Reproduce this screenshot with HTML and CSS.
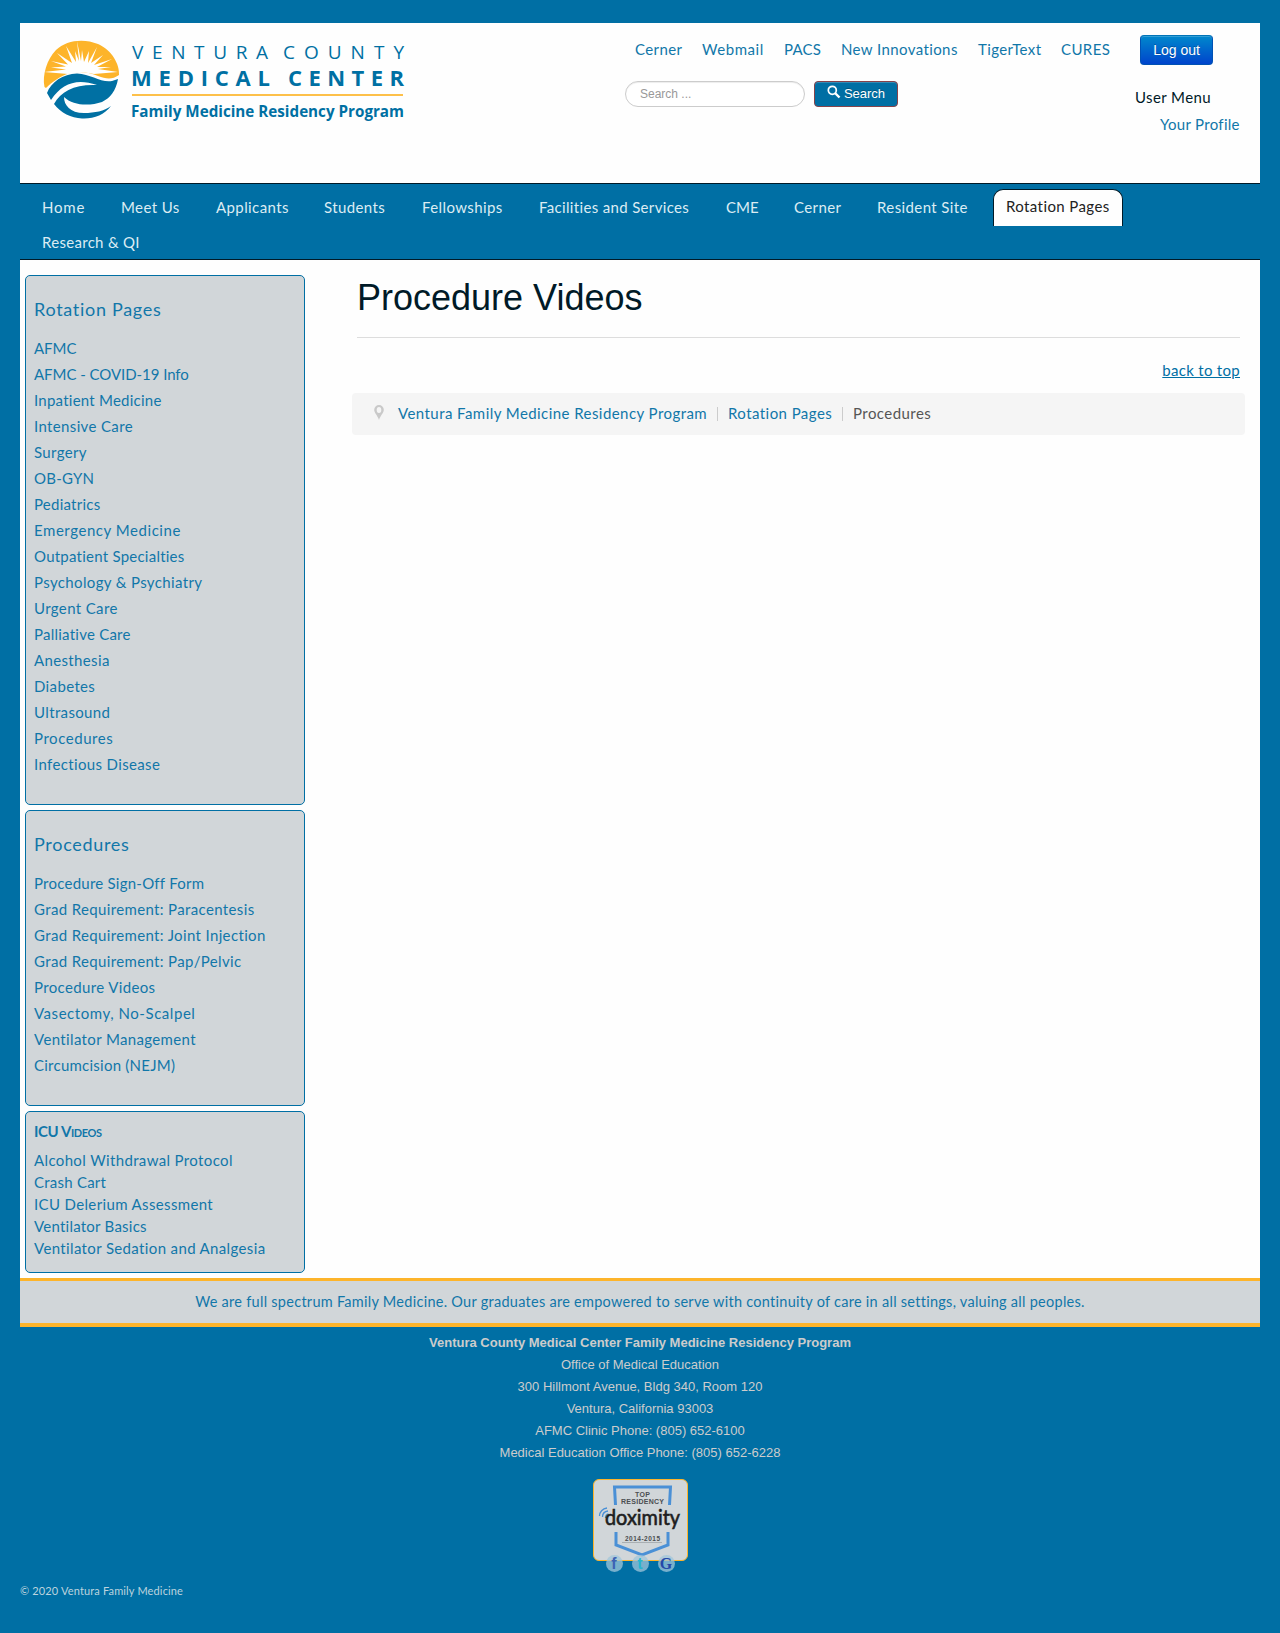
FILE: index.html
```html
<!DOCTYPE html>
<html lang="en">
<head>
<meta charset="utf-8">
<title>Procedure Videos</title>
<link rel="stylesheet" href="styles.css">
</head>
<body>
<div class="page">
  <header class="header">
    <svg class="logo" width="375" height="96" viewBox="40 37 375 96" role="img" aria-label="Ventura County Medical Center">
      <path fill="#fdb42a" d="M44.500 87C42 75 47 59 56 50C66 40 84 38 98 44C112 50 120 65 119 75C112 80 106 79 98 76C88 72 80 71 70 73C60 76 52 82 46 88Z"/>
      <path fill="#fff" d="M82 50L84 62L89 51L88 63L97 47L91 63L103 55L94 65L112 59L97 67L111 67L98 69L118 72L94 74L82 72L68 74L44 72L66 69.500L51 67.500L66 66.500L51 61L68 64.500L57 53L72 63L66 46L76 62L75 51L79 61L77 41L81 61Z"/>
      <path fill="#0070a3" d="M47 93C51 82 63 74 77 73.500C91 74 101 83 112 81L118 79C116 91 110 98 102 102C90 106 73 106 64 97C64 105 70 113 84 113C95 113 104 111 111 106C104 115 94 119 82 118.500C71 118 61 113 54 104C61 91 75 84 97 85C77 78 62 83 51 100Z"/>
      <g fill="#0070a3" class="logo-text">
        <text x="132" y="59" font-size="19" textLength="136">VENTURA</text>
        <text x="283" y="59" font-size="19" textLength="121">COUNTY</text>
        <text x="131" y="85.500" font-size="22" font-weight="700" textLength="139">MEDICAL</text>
        <text x="288" y="85.500" font-size="22" font-weight="700" textLength="116">CENTER</text>
        <text x="131" y="116.500" font-size="16.500" font-weight="700" textLength="273" lengthAdjust="spacingAndGlyphs">Family Medicine Residency Program</text>
      </g>
      <path fill="#fdc04a" d="M132 94h271v2H132z"/>
    </svg>
    <div class="tools">
      <nav class="quick">
        <a class="w47">Cerner</a><a class="w62">Webmail</a><a class="w37">PACS</a><a class="w117">New Innovations</a><a class="w63">TigerText</a><a class="w49">CURES</a>
      </nav>
      <form class="search">
        <input type="text" placeholder="Search ...">
        <button type="button"><svg width="14" height="14" viewBox="0 0 14 14"><circle cx="5.300" cy="5.300" r="4" fill="none" stroke="#fff" stroke-width="1.700"/><path d="M8 8l4.500 4.500" stroke="#fff" stroke-width="2.400"/></svg>Search</button>
      </form>
    </div>
    <div class="user">
      <button class="logout" type="button">Log out</button>
      <div class="user-title">User Menu</div>
      <a class="profile">Your Profile</a>
    </div>
  </header>
  <nav class="menu">
    <a class="m-home">Home</a><a class="m-meet">Meet Us</a><a class="m-app">Applicants</a><a class="m-stu">Students</a><a class="m-fel">Fellowships</a><a class="m-fac">Facilities and Services</a><a class="m-cme">CME</a><a class="m-cer">Cerner</a><a class="m-res">Resident Site</a><a class="active">Rotation Pages</a><a class="m-qi">Research &amp; QI</a>
  </nav>
  <div class="content">
    <aside class="sidebar">
      <section class="box rotation">
        <h3>Rotation Pages</h3>
        <ul>
          <li class="flat">AFMC</li><li class="flat">AFMC - COVID-19 Info</li><li class="tight">Inpatient Medicine</li><li>Intensive Care</li><li>Surgery</li><li class="tight">OB-GYN</li><li class="tight">Pediatrics</li><li class="wide">Emergency Medicine</li><li class="tight">Outpatient Specialties</li><li>Psychology &amp; Psychiatry</li><li>Urgent Care</li><li class="tight">Palliative Care</li><li>Anesthesia</li><li>Diabetes</li><li>Ultrasound</li><li class="wide">Procedures</li><li>Infectious Disease</li>
        </ul>
      </section>
      <section class="box procedures">
        <h3>Procedures</h3>
        <ul>
          <li class="tight">Procedure Sign-Off Form</li><li>Grad Requirement: Paracentesis</li><li>Grad Requirement: Joint Injection</li><li>Grad Requirement: Pap/Pelvic</li><li>Procedure Videos</li><li class="wide">Vasectomy, No-Scalpel</li><li>Ventilator Management</li><li class="tight">Circumcision (NEJM)</li>
        </ul>
      </section>
      <section class="box videos">
        <h4>ICU Videos</h4>
        <ul>
          <li>Alcohol Withdrawal Protocol</li><li class="tight">Crash Cart</li><li>ICU Delerium Assessment</li><li class="tight">Ventilator Basics</li><li>Ventilator Sedation and Analgesia</li>
        </ul>
      </section>
    </aside>
    <main class="main">
      <h1>Procedure Videos</h1>
      <a class="top">back to top</a>
      <div class="crumbs">
        <svg width="10" height="15" viewBox="0 0 10 15"><path fill="#c9c9c9" fill-rule="evenodd" d="M5 0a4.800 4.800 0 0 1 4.800 4.800C9.800 8 6.500 10.500 5 15C3.500 10.500.2 8 .2 4.800A4.800 4.800 0 0 1 5 0zM5 2a2.300 3 0 0 0 0 6a2.300 3 0 0 0 0-6z"/></svg>
        <a class="c1">Ventura Family Medicine Residency Program</a><i></i><a class="c2">Rotation Pages</a><i></i><span>Procedures</span>
      </div>
    </main>
  </div>
  <div class="banner">We are full spectrum Family Medicine. Our graduates are empowered to serve with continuity of care in all settings, valuing all peoples.</div>
</div>
<footer class="footer">
  <p><b>Ventura County Medical Center Family Medicine Residency Program</b></p>
  <p>Office of Medical Education</p>
  <p>300 Hillmont Avenue, Bldg 340, Room 120</p>
  <p>Ventura, California 93003</p>
  <p>AFMC Clinic Phone: (805) 652-6100</p>
  <p>Medical Education Office Phone: (805) 652-6228</p>
  <div class="badge">
    <svg width="93" height="80" viewBox="0 0 93 80">
      <g fill="none" stroke="#4a90d6" stroke-width="3">
        <path d="M21.500 25L20.500 7h56l-1 18M22 52v13l26 10 26-10V52"/>
        <path stroke-width="1.300" d="M5.500 36c0-4 3-7.500 7.500-8M8.500 37c0-3 2-5.500 5.500-6M11.500 38c0-2 1-3.500 3-4"/>
      </g>
      <path stroke="#a9afb3" d="M28 62.500h40"/>
      <g fill="#4b4e52" class="badge-text">
        <text x="41" y="16.500" font-size="7" textLength="15">TOP</text>
        <text x="27" y="24" font-size="7" textLength="43">RESIDENCY</text>
        <text x="31" y="61" font-size="6.500" textLength="35">2014-2015</text>
      </g>
      <text class="dox" x="11" y="45" font-size="21" fill="#1d1d20" stroke="#1d1d20" stroke-width=".6" textLength="75" lengthAdjust="spacingAndGlyphs">doximity</text>
    </svg>
  </div>
  <div class="social">
    <a class="fb">f</a><a class="tw">t</a><a class="gg">G</a>
  </div>
  <div class="copy">© 2020 Ventura Family Medicine</div>
</footer>
</body>
</html>
```
FILE: styles.css
```css
* { box-sizing: border-box; }
body {
  margin: 0;
  padding: 23px 20px 0;
  height: 1633px;
  background: #006fa4;
  color: #001a27;
  font: 15px/22px Lato, "Open Sans", sans-serif;
  letter-spacing: .4px;
}
a { color: #1177a9; white-space: nowrap; }
ul { list-style: none; margin: 0; padding: 0; }
input, button { letter-spacing: 0; }
.page { background: #fefefe; }

.header { height: 160px; display: flex; }
.logo { margin: 14px 0 0 20px; flex: none; }
.logo-text { font-family: "Open Sans", sans-serif; letter-spacing: 0; }
.tools { margin-left: 210px; width: 495px; flex: none; }
.quick { display: flex; gap: 20px; padding: 15px 0 0 10px; }
.w47 { width: 47px; } .w62 { width: 62px; letter-spacing: .55px; } .w37 { width: 37px; letter-spacing: .2px; }
.w117 { width: 117px; } .w63 { width: 63px; } .w49 { width: 49px; }
.search { display: flex; gap: 9px; margin: 21px 0 0; }
.search input {
  width: 180px; height: 26px;
  border: 1px solid #ccc; border-radius: 13px;
  padding: 0 14px; background: #fff;
  font: 12px "Liberation Sans", Arial, sans-serif;
  box-shadow: inset 0 1px 1px rgba(0,0,0,.075);
}
.search input::placeholder { color: #999; }
.search button {
  width: 84px; height: 26px; padding: 0 0 2px;
  display: flex; align-items: center; justify-content: center; gap: 3px;
  color: #fff; background: #006fa4;
  border: 1px solid #87434a; border-radius: 4px;
  font: 13px "Liberation Sans", Arial, sans-serif;
  text-shadow: 0 -1px 0 rgba(0,0,0,.25);
  box-shadow: inset 0 1px 0 rgba(255,255,255,.2);
}
.search button svg { margin-top: -2px; }
.user { flex: 1; display: flex; flex-direction: column; align-items: flex-start; padding: 12px 0 0 15px; }
.logout {
  margin-left: 5px; width: 73px; height: 30px; padding: 0;
  color: #fff; border: 1px solid #0052b4; border-top-color: #0074b8; border-radius: 4px;
  background: linear-gradient(#08c, #04c);
  font: 14px "Liberation Sans", Arial, sans-serif;
  text-shadow: 0 -1px 0 rgba(0,0,0,.25);
  box-shadow: inset 0 1px 0 rgba(255,255,255,.2);
}
.user-title { margin-top: 21px; }
.profile { margin: 5px 0 0 25px; letter-spacing: .3px; }

.menu {
  height: 77px; border: solid #001a27; border-width: 1px 0;
  background: #006fa4;
  display: flex; flex-wrap: wrap; align-content: flex-start;
  padding: 5px 22px 0;
}
.menu a { color: #dcecf3; height: 35px; line-height: 36px; }
.m-home { width: 79px; letter-spacing: .8px; } .m-meet { width: 95px; } .m-app { width: 108px; }
.m-stu { width: 98px; } .m-fel { width: 117px; }
.m-fac { width: 187px; letter-spacing: .34px; }
.m-cme { width: 68px; letter-spacing: 0; } .m-cer { width: 83px; } .m-res { width: 116px; }
.m-qi { width: 130px; letter-spacing: .3px; }
.menu .active {
  width: 130px; height: 37px; margin: 0 40px -2px 0; padding-left: 12px; line-height: 32px;
  color: #222; background: #fefefe;
  border: 1px solid #001a27; border-bottom: 0; border-radius: 10px 10px 0 0;
}

.content { display: flex; height: 1018px; padding: 15px 15px 0 5px; }
.sidebar { width: 280px; display: flex; flex-direction: column; gap: 5px; }
.box { background: #d1d6d9; border: 1px solid #006fa4; border-radius: 5px; padding: 0 8px; color: #1177a9; letter-spacing: .36px; }
.box li { line-height: 26px; white-space: nowrap; }
.box .flat { letter-spacing: -.05px; }
.box .tight { letter-spacing: .24px; }
.box .wide { letter-spacing: .55px; }
.rotation { height: 530px; }
.procedures { height: 296px; }
.videos { height: 162px; }
.box h3 { margin: 21px 0 14px; font: 18px/24px Lato, sans-serif; letter-spacing: .7px; }
.box h4 { margin: 8px 0 7px; font-size: 15px; line-height: 22px; font-variant: small-caps; letter-spacing: -.4px; }
.box.videos li { line-height: 22px; }

.main { flex: 1; margin-left: 47px; display: flex; flex-direction: column; }
.main h1 {
  margin: 0 5px; height: 63px; border-bottom: 1px solid #ddd;
  font: 36px/46px "Liberation Sans", Arial, sans-serif; letter-spacing: 0;
}
.top { align-self: flex-end; margin: 21px 5px 12px 0; color: #006fa4; text-decoration: underline; letter-spacing: .3px; }
.crumbs { height: 42px; background: #f5f5f5; border-radius: 4px; display: flex; align-items: center; padding: 0 22px 2px; color: #555; letter-spacing: .44px; }
.crumbs svg { margin: -2px 14px 0 0; }
.crumbs i { width: 1px; height: 14px; background: #ccc; margin: 2px 10px 0; }
.c1 { width: 309px; } .c2 { width: 104px; }

.banner {
  height: 49px; border: solid #fdb42a; border-width: 3px 0 4px;
  background: #d1d6d9; color: #1177a9; text-align: center;
  font-size: 14.5px; line-height: 42px; letter-spacing: .27px;
  white-space: nowrap;
}

.footer { color: #ccc; text-align: center; font: 13px/22px "Liberation Sans", Arial, sans-serif; padding-top: 5px; letter-spacing: 0; }
.footer p { margin: 0; }
.badge { width: 95px; height: 82px; margin: 15px auto 0; background: #d1d6d9; border: 1px solid #fdb42a; border-radius: 6px; }
.badge svg { display: block; }
.badge-text { font-family: "Liberation Sans", Arial, sans-serif; font-weight: 700; }
.dox { font-family: Lato, sans-serif; }
.social { position: relative; display: flex; justify-content: center; gap: 9px; margin-top: -6px; }
.social a { width: 17px; height: 17px; border-radius: 50%; background: rgba(160,198,218,.75); line-height: 17px; font-weight: 700; font-size: 16px; }
.social .fb { color: #3c62b4; }
.social .tw { color: #28b6cf; }
.social .gg { color: #2448a8; font-family: "Liberation Serif", serif; }
.copy { text-align: left; margin-top: 8px; font: 11px/22px Lato, sans-serif; letter-spacing: .15px; color: #bcd3de; }
```
